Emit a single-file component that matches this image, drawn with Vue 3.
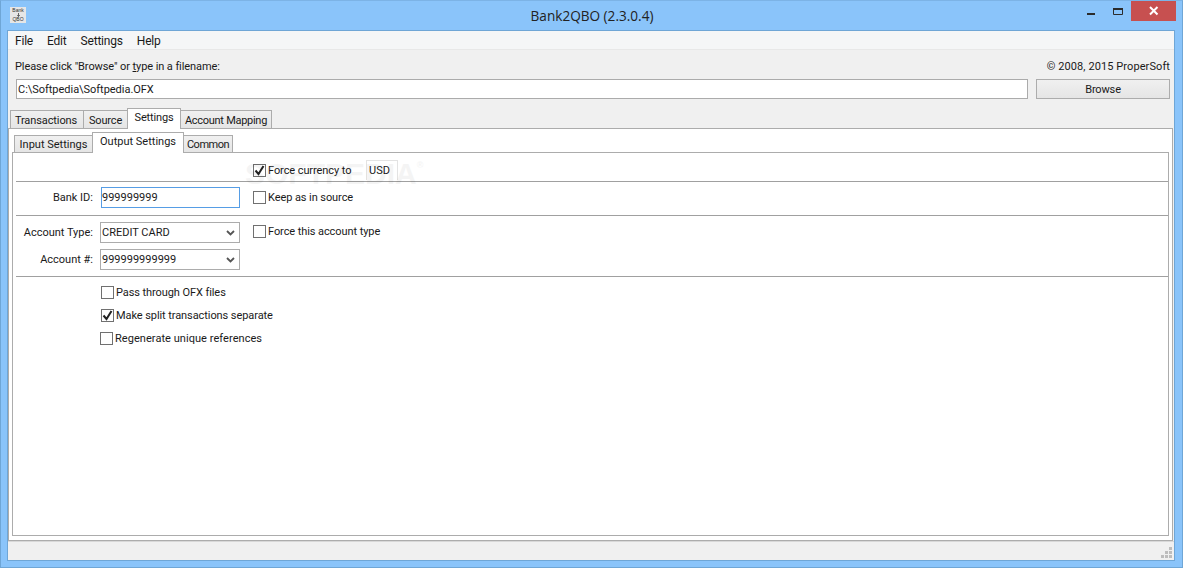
<template>
  <div class="window">
    <header class="titlebar">
      <div class="appicon">
        <span>Bank</span>
        <svg width="5" height="5" viewBox="0 0 5 5"><path d="M2.5 0v4M1 2.5l1.5 2 1.5-2" fill="none" stroke="#444"/></svg>
        <span>QBO</span>
      </div>
      <div class="title">Bank2QBO (2.3.0.4)</div>
      <div class="controls">
        <div class="ctl"><svg width="12" height="12" viewBox="0 0 12 12"><rect x="2" y="8" width="8" height="2" fill="#2b2b2b"/></svg></div>
        <div class="ctl"><svg width="12" height="12" viewBox="0 0 12 12"><path d="M1.5 4h9v5.5h-9z" fill="none" stroke="#2b2b2b"/><rect x="1" y="3" width="10" height="2" fill="#2b2b2b"/></svg></div>
        <div class="close"><svg width="12" height="12" viewBox="0 0 12 12"><path d="M2 2l7.5 7.5M9.5 2L2 9.5" stroke="#fff" stroke-width="2"/></svg></div>
      </div>
    </header>
    <div class="client">
      <nav class="menu">
        <span v-for="m in menus" :key="m">{{ m }}</span>
      </nav>
      <div class="body">
        <div class="hintrow">
          <span class="hint">Please click "Browse" or <u>t</u>ype in a filename:</span>
          <span class="copy">© 2008, 2015 ProperSoft</span>
        </div>
        <div class="filerow">
          <div class="fileinput">C:\Softpedia\Softpedia.OFX</div>
          <div class="browse">Browse</div>
        </div>
        <div class="tabs outer">
          <div v-for="t in tabs" :key="t.n" class="tab" :class="{ active: t.n === 'Settings' }" :style="{ width: t.w + 'px', letterSpacing: t.ls + 'px' }">{{ t.n }}</div>
        </div>
        <div class="outerpanel">
          <div class="tabs inner">
            <div v-for="t in subtabs" :key="t.n" class="tab" :class="{ active: t.n === 'Output Settings' }" :style="{ width: t.w + 'px', letterSpacing: t.ls + 'px' }">{{ t.n }}</div>
          </div>
          <div class="innerpanel">
            <div class="watermark">SOFTPEDIA<span>®</span></div>
            <section class="row r1">
              <div class="field"></div>
              <label class="check"><span class="box on"><svg width="11" height="11" viewBox="0 0 11 11"><path d="M1.5 5.5l3 3.5 5-8" fill="none" stroke="#222" stroke-width="2"/></svg></span>Force currency to</label>
              <div class="usd">USD</div>
            </section>
            <section class="row r2">
              <div class="lbl">Bank ID:</div>
              <div class="textbox">999999999</div>
              <label class="check"><span class="box"></span>Keep as in source</label>
            </section>
            <section class="row r3">
              <div class="col">
                <div class="pair">
                  <div class="lbl">Account Type:</div>
                  <div class="select">CREDIT CARD<svg width="9" height="6" viewBox="0 0 9 6"><path d="M1 1l3.5 3.5L8 1" fill="none" stroke="#555" stroke-width="1.8"/></svg></div>
                </div>
                <div class="pair">
                  <div class="lbl">Account #:</div>
                  <div class="select">999999999999<svg width="9" height="6" viewBox="0 0 9 6"><path d="M1 1l3.5 3.5L8 1" fill="none" stroke="#555" stroke-width="1.8"/></svg></div>
                </div>
              </div>
              <label class="check top"><span class="box"></span>Force this account type</label>
            </section>
            <section class="opts">
              <label class="check"><span class="box"></span>Pass through OFX files</label>
              <label class="check"><span class="box on"><svg width="11" height="11" viewBox="0 0 11 11"><path d="M1.5 5.5l3 3.5 5-8" fill="none" stroke="#222" stroke-width="2"/></svg></span>Make split transactions separate</label>
              <label class="check shift"><span class="box"></span>Regenerate unique references</label>
            </section>
          </div>
        </div>
      </div>
      <footer class="status">
        <svg width="12" height="12" viewBox="0 0 12 12" fill="#bdbdbd"><rect x="8" y="0" width="3" height="3"/><rect x="4" y="4" width="3" height="3"/><rect x="8" y="4" width="3" height="3"/><rect x="0" y="8" width="3" height="3"/><rect x="4" y="8" width="3" height="3"/><rect x="8" y="8" width="3" height="3"/></svg>
      </footer>
    </div>
  </div>
</template>

<script setup>
const menus = ['File', 'Edit', 'Settings', 'Help']
const tabs = [
  { n: 'Transactions', w: 74, ls: -0.1 },
  { n: 'Source', w: 45, ls: -0.15 },
  { n: 'Settings', w: 54, ls: -0.15 },
  { n: 'Account Mapping', w: 92, ls: -0.28 }
]
const subtabs = [
  { n: 'Input Settings', w: 79, ls: 0 },
  { n: 'Output Settings', w: 92, ls: 0 },
  { n: 'Common', w: 50, ls: -0.5 }
]
</script>

<style scoped>
.window {
  width: 1183px;
  height: 568px;
  box-sizing: border-box;
  background: #8ac4fa;
  border: 1px solid #6fa6d6;
  border-top-color: #7cb3e6;
  display: flex;
  flex-direction: column;
  font-family: Roboto, sans-serif;
  font-size: 11px;
  color: #1a1a1a;
  overflow: hidden;
}
.titlebar {
  height: 29px;
  display: flex;
  flex: none;
}
.appicon {
  width: 16px;
  height: 16px;
  margin: 6px 0 0 9px;
  background: #e6e6e6;
  font: 5px/5px "Liberation Sans", sans-serif;
  color: #333;
  display: flex;
  flex-direction: column;
  align-items: center;
  justify-content: space-between;
  padding: 1px 0;
  box-sizing: border-box;
  flex: none;
}
.title {
  flex: 1;
  text-align: center;
  font-family: "Open Sans", sans-serif;
  font-size: 13.6px;
  line-height: 29px;
  color: #222;
  margin-left: 81px;
}
.controls { display: flex; align-items: flex-start; margin-right: 6px; height: 20px; flex: none; }
.ctl { width: 27px; height: 20px; display: flex; align-items: center; justify-content: center; }
.close { width: 45px; height: 20px; background: #c75050; display: flex; align-items: center; justify-content: center; }
.client {
  flex: 1;
  margin: 0 7px 6px 6px;
  border: 1px solid #6fa6d6;
  background: #f0f0f0;
  display: flex;
  flex-direction: column;
  min-height: 0;
}
.menu {
  height: 18px;
  flex: none;
  background: #f5f6f7;
  border-bottom: 1px solid #e8e8e8;
  display: flex;
  gap: 14px;
  padding-left: 7px;
  font-size: 12px;
  line-height: 20px;
  letter-spacing: -0.2px;
}
.body { flex: 1; display: flex; flex-direction: column; min-height: 0; }
.hintrow {
  display: flex;
  justify-content: space-between;
  padding: 10px 4px 0 7px;
  height: 20px;
  line-height: 14px;
  box-sizing: border-box;
  margin-bottom: 9px;
}
.hint { letter-spacing: -0.09px; }
.copy { letter-spacing: 0.09px; }
.filerow {
  display: flex;
  padding: 0 4px 0 8px;
  gap: 8px;
  height: 20px;
}
.fileinput {
  flex: 1;
  box-sizing: border-box;
  background: #fff;
  border: 1px solid #ababab;
  padding-left: 1px;
  line-height: 20px;
  letter-spacing: -0.03px;
}
.browse {
  width: 134px;
  box-sizing: border-box;
  border: 1px solid #acacac;
  background: linear-gradient(#f0f0f0, #e5e5e5);
  text-align: center;
  line-height: 20px;
  letter-spacing: -0.15px;
}
.tabs { display: flex; flex: none; align-items: flex-end; }
.tabs.outer { height: 19px; margin-top: 10px; padding-left: 2px; position: relative; z-index: 1; }
.tabs.inner { height: 19px; margin-top: 4px; padding-left: 2px; position: relative; z-index: 1; }
.tab {
  box-sizing: border-box;
  height: 18px;
  line-height: 19px;
  text-align: center;
  border: 1px solid #acacac;
  border-bottom: none;
  margin-right: -1px;
  background: linear-gradient(#f0f0f0, #e5e5e5);
  flex: none;
}
.tabs.outer .tab:first-child { padding-right: 2px; }
.tabs.inner .tab { height: 17px; line-height: 17px; }
.tabs .tab.active,
.tabs.inner .tab.active {
  height: 21px;
  background: #fff;
  margin-bottom: -1px;
  line-height: 18px;
  position: relative;
  z-index: 2;
}
.outerpanel {
  flex: 1;
  box-sizing: border-box;
  background: #fff;
  border: 1px solid #acacac;
  margin: 0 1px 0 0;
  padding: 0 3px 4px 3px;
  display: flex;
  flex-direction: column;
  min-height: 0;
}
.innerpanel {
  flex: 1;
  box-sizing: border-box;
  border: 1px solid #acacac;
  padding: 0 0 0 3px;
  position: relative;
  min-height: 0;
}
.watermark {
  position: absolute;
  left: 232px;
  top: 4px;
  font: bold 30px "Liberation Sans", sans-serif;
  color: #000;
  opacity: 0.04;
  pointer-events: none;
  white-space: nowrap;
}
.watermark span { font-size: 9px; vertical-align: 16px; }
.row { border-bottom: 1px solid #a0a0a0; display: flex; box-sizing: border-box; }
.r1 { height: 29px; align-items: center; padding-top: 7px; padding-bottom: 1px; }
.r1 .field { width: 237px; }
.r1 .check { width: 101px; flex: none; }
.r2 { height: 34px; align-items: center; padding-bottom: 3px; }
.r3 { height: 61px; padding-top: 6px; }
.lbl { width: 77px; text-align: right; margin-right: 7px; flex: none; }
.textbox {
  width: 139px;
  height: 21px;
  box-sizing: border-box;
  border: 1px solid #569de5;
  background: #fff;
  line-height: 19px;
  padding-left: 0;
  margin-right: 13px;
  flex: none;
  margin-left: 1px;
}
.col { display: flex; flex-direction: column; gap: 6px; width: 237px; flex: none; }
.pair { display: flex; align-items: center; height: 21px; }
.select {
  width: 140px;
  height: 21px;
  box-sizing: border-box;
  border: 1px solid #acacac;
  background: #fff;
  line-height: 19px;
  padding: 0 4px 0 1px;
  display: flex;
  justify-content: space-between;
  align-items: center;
  flex: none;
}
.check { display: flex; align-items: center; gap: 2px; height: 14px; letter-spacing: -0.08px; }
.check.top { margin-top: 2px; }
.box {
  width: 13px;
  height: 13px;
  box-sizing: border-box;
  border: 1px solid #707070;
  background: #fff;
  flex: none;
  display: flex;
  align-items: center;
  justify-content: center;
}
.usd {
  width: 32px;
  height: 20px;
  box-sizing: border-box;
  border: 1px solid #e3e3e3;
  border-bottom: none;
  padding-left: 2px;
  line-height: 19px;
  margin-left: 12px;
}
.opts { display: flex; flex-direction: column; gap: 9px; padding: 8px 0 0 85px; }
.shift { margin-left: -1px; letter-spacing: 0.05px; }
.status {
  height: 18px;
  flex: none;
  display: flex;
  justify-content: flex-end;
  align-items: flex-end;
  border-top: 1px solid #d8d8d8;
}
.status svg { margin: 0 1px 1px 0; }
</style>

<style>
html, body { margin: 0; overflow: hidden; }
</style>
